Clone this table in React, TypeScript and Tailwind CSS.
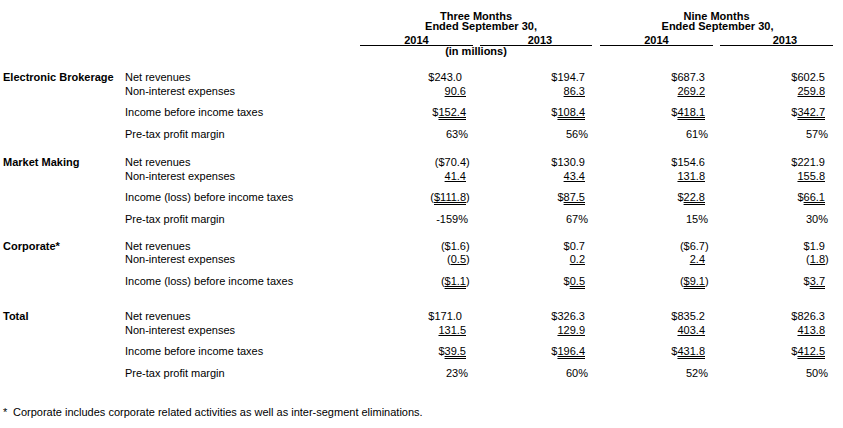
import React from "react";

type V = {
  pre?: string; // prefix outside underline e.g. "$" or "("
  num: string; // number (underlined part)
  paren?: boolean; // closing paren hanging
  pad?: boolean; // extra right pad
};

type Kind = "plain" | "single" | "double" | "pct";

const widths = ["w-[86px]", "w-[119px]", "w-[120px]", "w-[120px]"];
const pctShift = ["mr-[-2px]", "mr-[-3px]", "mr-[-3px]", "mr-[-3px]"];

function parse(s: string): V {
  let pre = "";
  let num = s;
  let paren = false;
  if (num.startsWith("(")) {
    pre = "(";
    num = num.slice(1);
  }
  if (num.endsWith(")")) {
    paren = true;
    num = num.slice(0, -1);
  }
  return { pre, num, paren };
}

function Cell({ s, kind, col, pad }: { s: string; kind: Kind; col: number; pad?: boolean }) {
  if (kind === "pct") {
    return (
      <div className={`${widths[col]} shrink-0 text-right`}>
        <span className={`inline-block ${pctShift[col]}`}>{s}</span>
      </div>
    );
  }
  const v = parse(s);
  let outside = v.pre || "";
  let inside = v.num;
  // for double underline, positive values keep "$" outside the line
  if (kind === "double" && !v.pre && inside.startsWith("$")) {
    outside = "$";
    inside = inside.slice(1);
  }
  if (kind === "single" && inside.startsWith("$")) {
    outside = outside + "$";
    inside = inside.slice(1);
  }
  const deco =
    kind === "single"
      ? "underline decoration-1 underline-offset-[1px]"
      : kind === "double"
      ? "underline decoration-double decoration-1 underline-offset-[1px]"
      : "";
  return (
    <div className={`${widths[col]} shrink-0 text-right ${pad ? "pr-[4px]" : ""}`}>
      {outside}
      <span className={deco}>{inside}</span>
      <span className="inline-block w-0 overflow-visible">{v.paren ? ")" : ""}</span>
    </div>
  );
}

function Row({
  label,
  vals,
  kind,
  cls = "",
  padFirst,
}: {
  label: string;
  vals: string[];
  kind: Kind;
  cls?: string;
  padFirst?: boolean;
}) {
  return (
    <div className={`flex h-[14px] leading-[14px] ${cls}`}>
      <div className="w-[255px] shrink-0">{label}</div>
      {vals.map((v, i) => (
        <Cell key={i} s={v} kind={kind} col={i} pad={padFirst && i === 0 && !v.startsWith("(")} />
      ))}
    </div>
  );
}

function Section({
  title,
  cls,
  children,
}: {
  title: string;
  cls?: string;
  children: React.ReactNode;
}) {
  return (
    <div className={`flex ${cls ?? ""}`}>
      <div className="w-[122px] shrink-0 font-bold leading-[14px]">{title}</div>
      <div className="flex flex-col">{children}</div>
    </div>
  );
}

export default function App() {
  return (
    <div
      className="w-[843px] h-[428px] bg-white text-black text-[11px] overflow-hidden"
      style={{ fontFamily: '"Liberation Sans", Arial, sans-serif' }}
    >
      {/* header */}
      <div className="flex pt-[11px] font-bold leading-[10px]">
        <div className="w-[360px] shrink-0" />
        <div className="w-[232px] shrink-0 flex flex-col">
          <div className="text-center">Three Months</div>
          <div className="text-center pl-[10px]">Ended September 30,</div>
          <div className="flex gap-[7px] mt-[4px]">
            <div className="w-[113px] border-b border-black text-center">2014</div>
            <div className="w-[112px] border-b border-black text-center pl-[8px]">2013</div>
          </div>
          <div className="text-center">(in millions)</div>
        </div>
        <div className="w-[233px] ml-[8px] shrink-0 flex flex-col">
          <div className="text-center">Nine Months</div>
          <div className="text-center pl-[2px]">Ended September 30,</div>
          <div className="flex gap-[7px] mt-[4px]">
            <div className="w-[113px] border-b border-black text-center">2014</div>
            <div className="w-[113px] border-b border-black text-center pl-[17px]">2013</div>
          </div>
        </div>
      </div>

      <div className="pl-[3px]">
        <Section title="Electronic Brokerage" cls="mt-[14px]">
          <Row label="Net revenues" vals={["$243.0", "$194.7", "$687.3", "$602.5"]} kind="plain" padFirst />
          <Row label="Non-interest expenses" vals={["90.6", "86.3", "269.2", "259.8"]} kind="single" />
          <Row label="Income before income taxes" vals={["$152.4", "$108.4", "$418.1", "$342.7"]} kind="double" cls="mt-[7px]" />
          <Row label="Pre-tax profit margin" vals={["63%", "56%", "61%", "57%"]} kind="pct" cls="mt-[8px]" />
        </Section>

        <Section title="Market Making" cls="mt-[14px]">
          <Row label="Net revenues" vals={["($70.4)", "$130.9", "$154.6", "$221.9"]} kind="plain" padFirst />
          <Row label="Non-interest expenses" vals={["41.4", "43.4", "131.8", "155.8"]} kind="single" />
          <Row label="Income (loss) before income taxes" vals={["($111.8)", "$87.5", "$22.8", "$66.1"]} kind="double" cls="mt-[7px]" />
          <Row label="Pre-tax profit margin" vals={["-159%", "67%", "15%", "30%"]} kind="pct" cls="mt-[8px]" />
        </Section>

        <Section title="Corporate*" cls="mt-[13px]">
          <Row label="Net revenues" vals={["($1.6)", "$0.7", "($6.7)", "$1.9"]} kind="plain" padFirst />
          <Row label="Non-interest expenses" vals={["(0.5)", "0.2", "2.4", "(1.8)"]} kind="single" cls="mt-[-1px]" />
          <Row label="Income (loss) before income taxes" vals={["($1.1)", "$0.5", "($9.1)", "$3.7"]} kind="double" cls="mt-[8px]" />
        </Section>

        <Section title="Total" cls="mt-[21px]">
          <Row label="Net revenues" vals={["$171.0", "$326.3", "$835.2", "$826.3"]} kind="plain" padFirst />
          <Row label="Non-interest expenses" vals={["131.5", "129.9", "403.4", "413.8"]} kind="single" />
          <Row label="Income before income taxes" vals={["$39.5", "$196.4", "$431.8", "$412.5"]} kind="double" cls="mt-[7px]" />
          <Row label="Pre-tax profit margin" vals={["23%", "60%", "52%", "50%"]} kind="pct" cls="mt-[8px]" />
        </Section>

        <div className="mt-[25px] leading-[14px] flex">
          <span className="inline-block w-[10px]">*</span>
          <span>Corporate includes corporate related activities as well as inter-segment eliminations.</span>
        </div>
      </div>
    </div>
  );
}
